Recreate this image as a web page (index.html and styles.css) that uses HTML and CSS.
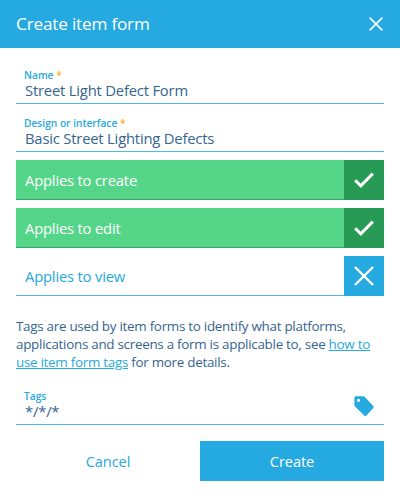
FILE: index.html
```
<!DOCTYPE html>
<html lang="en">
<head>
<meta charset="utf-8">
<meta name="viewport" content="width=device-width,initial-scale=1">
<title>Create item form</title>
<link rel="stylesheet" href="styles.css">
</head>
<body>
<div class="dialog">
  <header class="header">
    <h1>Create item form</h1>
    <button type="button" class="close" aria-label="Close">
      <svg width="16" height="16" viewBox="0 0 16 16"><path d="M1.6 1.6l12.8 12.8M14.4 1.6L1.6 14.4"/></svg>
    </button>
  </header>

  <form class="body">
    <div class="field">
      <div class="text">
        <div class="label">Name <span class="req">*</span></div>
        <div class="value">Street Light Defect Form</div>
      </div>
    </div>
    <div class="field">
      <div class="text">
        <div class="label">Design or interface <span class="req">*</span></div>
        <div class="value">Basic Street Lighting Defects</div>
      </div>
    </div>

    <!-- toggles -->
    <div class="toggle on">
      <span class="name">Applies to create</span>
      <span class="box"><svg width="20" height="20" viewBox="0 0 20 20"><path d="M1.2 10.2l5.6 5.6L18.8 3.6"/></svg></span>
    </div>
    <div class="toggle on">
      <span class="name">Applies to edit</span>
      <span class="box"><svg width="20" height="20" viewBox="0 0 20 20"><path d="M1.2 10.2l5.6 5.6L18.8 3.6"/></svg></span>
    </div>
    <div class="toggle">
      <span class="name">Applies to view</span>
      <span class="box"><svg width="20" height="20" viewBox="0 0 20 20"><path d="M1 1l18 18M19 1L1 19"/></svg></span>
    </div>

    <p class="help">Tags are used by item forms to identify what platforms, applications and screens a form is applicable to, see <a href="#">how to use item form tags</a> for more details.</p>

    <div class="field tags">
      <div class="text">
        <div class="label">Tags</div>
        <div class="value">*/*/*</div>
      </div>
      <svg class="tag" width="20" height="20" viewBox="0 0 20 20"><path fill-rule="evenodd" d="M2 .2h7.2q.8 0 1.4.6l8.6 9.2q1 1.1 0 2.200l-6.800 7.200q-1 1-2.100 0L1 10.600Q.4 10 .4 9.200V1.800Q.4.2 2 .2zM4.500 2.700a1.600 1.600 0 1 0 0 3.200 1.600 1.600 0 0 0 0-3.200z"/></svg>
    </div>

    <div class="actions">
      <button type="button" class="btn">Cancel</button>
      <button type="button" class="btn primary">Create</button>
    </div>
  </form>
</div>
</body>
</html>
```
FILE: styles.css
```
:root{--blue:#25a9e1;--txt:#356590;--line:#53b6e5;--green:#54d588;--dark:#279b56;--req:#f9ac25}
*{box-sizing:border-box}
body{margin:0;background:#fff;color:var(--txt);font-family:"Open Sans","Noto Sans",sans-serif}
button{appearance:none;border:0;padding:0;background:none;font-family:inherit;cursor:pointer}
svg{display:block;fill:none;stroke:#fff}
.header{display:flex;align-items:center;justify-content:space-between;height:48px;padding:0 16px;background:var(--blue);color:#fff}
h1{margin:0;font-size:17.2px;font-weight:400;line-height:24px;letter-spacing:-.2px}
.close svg{stroke-width:1.6}
.body{padding:16px 16px 0}
.field{display:flex;align-items:center;justify-content:space-between;height:40px;padding:0 10px 0 8px;border-bottom:1px solid var(--line)}
.field+.field{margin-top:8px}
.label{color:var(--blue);font-size:10.2px;font-weight:600;line-height:14px}
.req{color:var(--req)}
.value{padding-left:1px;font-size:14.8px;line-height:16px;letter-spacing:-.2px}
.text{padding-bottom:2px}
.toggle{display:flex;height:40px;margin-top:8px;border-bottom:1px solid var(--line);color:var(--blue);font-size:14.8px;line-height:40px;letter-spacing:-.2px}
.name{flex:1;padding-left:9px}
.box{display:grid;place-items:center;width:40px;height:40px;background:var(--blue)}
.box svg{stroke-width:2.4}
.on{border-color:#32a962;background:var(--green);color:#fff}
.on .box{background:var(--dark)}
.on svg{stroke-width:3}
.help{margin:21px 0 14px;font-size:13.4px;line-height:18px;letter-spacing:-.27px}
a{color:var(--blue)}
.tag{margin-top:2px;fill:var(--blue);stroke:none}
.actions{display:flex;margin-top:16px}
.btn{flex:1;height:40px;color:var(--blue);font-size:14.6px;letter-spacing:-.1px}
.primary{background:var(--blue);color:#fff}
```
